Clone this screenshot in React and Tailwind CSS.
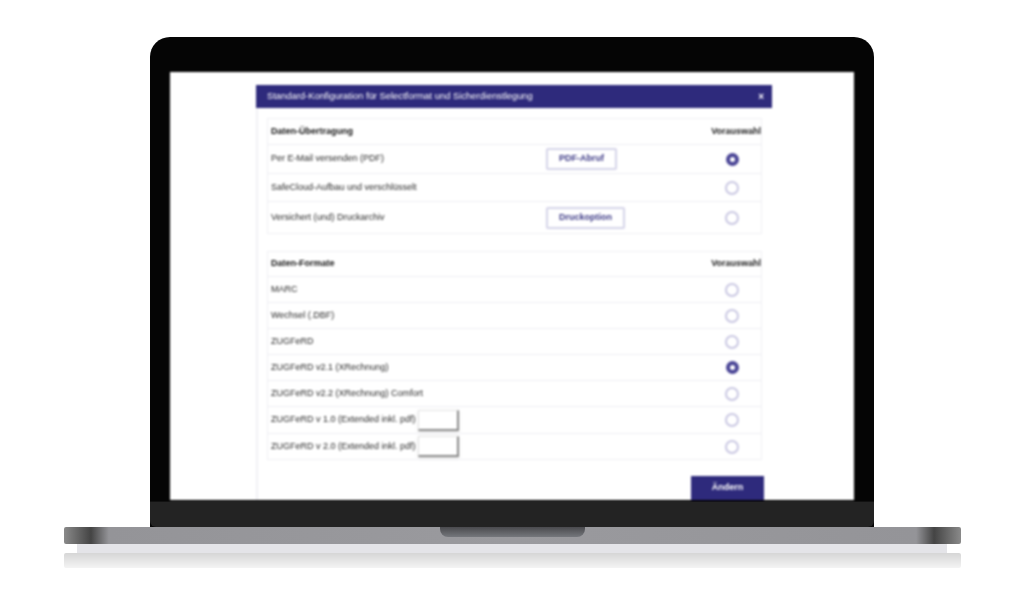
const Radio = ({ on }) =>
  on ? (
    <span className="block w-[13px] h-[13px] rounded-full border-[4px] border-[#4a4596] bg-white" />
  ) : (
    <span className="block w-[14px] h-[14px] rounded-full border-2 border-[#c9c7e2] bg-white" />
  );

const Row = ({ label, h, on, btn, btnW, input, last }) => (
  <div
    style={{ height: h }}
    className={`flex items-center pl-[3px] ${last ? "" : "border-b border-[#eeeef3]"}`}
  >
    <span className="text-[9px] text-[#2a2a2a] whitespace-nowrap">{label}</span>
    {input && (
      <span className="ml-[2px] w-[41px] h-[21px] bg-white border border-[#e4e4e4] border-r-2 border-b-2 border-r-[#8a8a8a] border-b-[#8a8a8a] shadow-sm" />
    )}
    {btn && (
      <span
        style={{ width: btnW }}
        className="absolute left-[278px] h-[22px] flex items-center justify-center border-2 border-[#d5d4e8] rounded-[2px] text-[9px] font-bold text-[#3d3a86] bg-white"
      >
        {btn}
      </span>
    )}
    <span className="ml-auto w-[14px] mr-[22px] flex justify-center">
      <Radio on={on} />
    </span>
  </div>
);

const Head = ({ label, h }) => (
  <div style={{ height: h }} className="flex items-center justify-between pl-[3px] border-b border-[#eeeef3] text-[9px] font-bold text-[#111]">
    <span>{label}</span>
    <span className="font-bold text-[9px] text-[#222]">Vorauswahl</span>
  </div>
);

export default function App() {
  return (
    <div className="w-[1024px] h-[589px] bg-white overflow-hidden flex flex-col items-center pt-[37px] blur-[0.6px] font-['Liberation_Sans',Arial,sans-serif]">
      {/* lid */}
      <div className="w-[724px] h-[490px] shrink-0 rounded-t-[20px] bg-[#050505] px-5 pt-[35px] flex flex-col">
        <div className="h-[428px] bg-white overflow-hidden pl-[86px] pt-[13px] blur-[0.9px]">
          <div className="w-[516px] border-l-2 border-[#f1f1f5] h-full">
            <div className="-ml-[2px] h-[23px] bg-[#2e2a7c] flex items-center justify-between pl-[11px] pr-2 text-white text-[9.4px]">
              <span>Standard-Konfiguration für Selectformat und Sicherdienstlegung</span>
              <span className="text-[10px] font-bold leading-none">×</span>
            </div>
            <div className="ml-[9px] w-[495px] pt-[10px]">
              <div className="relative border border-[#f0f0f4] mb-[17px]">
                <Head label="Daten-Übertragung" h={26} />
                <Row label="Per E-Mail versenden (PDF)" h={29} on btn="PDF-Abruf" btnW={71} />
                <Row label="SafeCloud-Aufbau und verschlüsselt" h={28} />
                <Row label="Versichert (und) Druckarchiv" h={31} btn="Druckoption" btnW={79} last />
              </div>
              <div className="relative border border-[#f0f0f4]">
                <Head label="Daten-Formate" h={25} />
                <Row label="MARC" h={26} />
                <Row label="Wechsel (.DBF)" h={26} />
                <Row label="ZUGFeRD" h={26} />
                <Row label="ZUGFeRD v2.1 (XRechnung)" h={26} on />
                <Row label="ZUGFeRD v2.2 (XRechnung) Comfort" h={26} />
                <Row label="ZUGFeRD v 1.0 (Extended inkl. pdf)" h={27} input />
                <Row label="ZUGFeRD v 2.0 (Extended inkl. pdf)" h={25} input last />
              </div>
              <div className="flex justify-end mt-[16px] -mr-[2px]">
                <span className="w-[73px] h-[24px] bg-[#2e2a7c] text-white text-[9px] font-bold flex items-center justify-center">
                  Ändern
                </span>
              </div>
            </div>
          </div>
        </div>
        <div className="h-[26px] -mx-5 mt-px bg-[#232323] rounded-b-[6px] border-t border-[#111]" />
      </div>
      {/* base */}
      <div className="w-[897px] h-[17px] shrink-0 rounded-[2px] flex justify-center bg-[linear-gradient(90deg,#8a8a8a_0%,#444_3%,#949498_5%,#9a9a9e_50%,#949498_95%,#444_97%,#8a8a8a_100%)]">
        <div className="w-[145px] h-[10px] rounded-b-[8px] bg-[linear-gradient(180deg,#4a4a4e,#75777c)]" />
      </div>
      <div className="w-[870px] h-[9px] shrink-0 bg-[#e4e4e8]" />
      <div className="w-[897px] h-[15px] shrink-0 rounded-[2px] bg-[linear-gradient(180deg,#d6d6d6,#f4f4f4)]" />
    </div>
  );
}
